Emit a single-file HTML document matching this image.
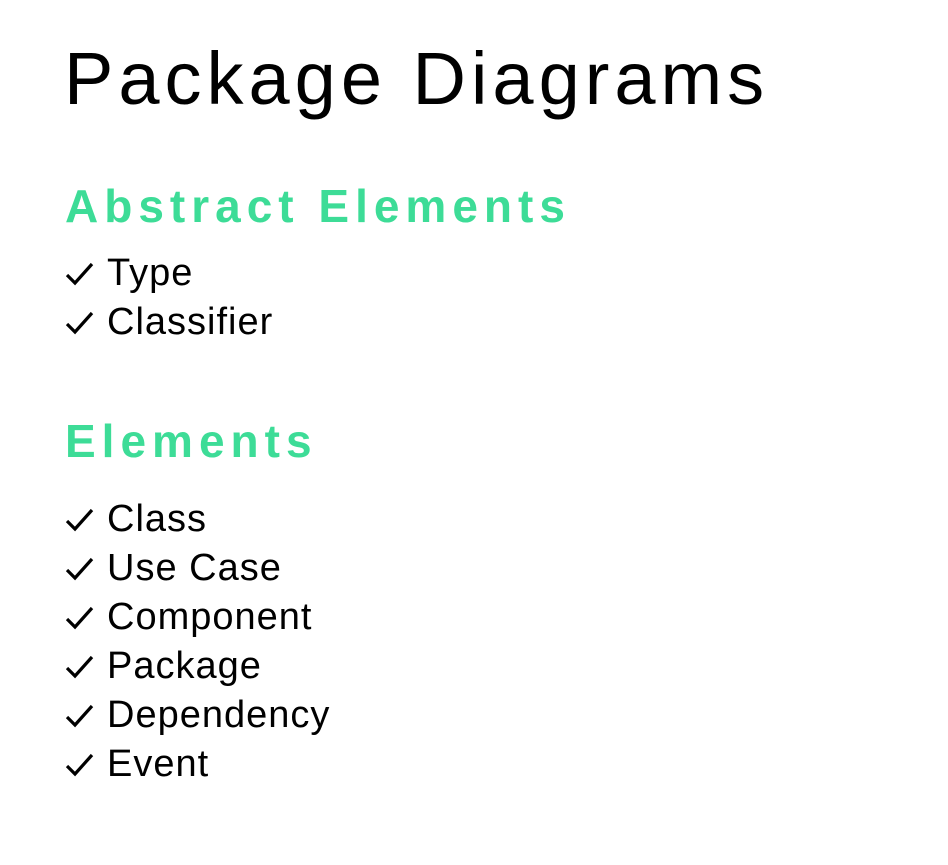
<!DOCTYPE html>
<html><head><style>
body{margin:0;width:948px;height:865px;background:#fff;position:relative;overflow:hidden;font-family:"Liberation Sans",sans-serif;color:#000}
.t{position:absolute;left:64px;top:42px;font-size:74px;line-height:74px;letter-spacing:5px;white-space:nowrap}
.h{position:absolute;left:65px;font-size:46px;line-height:46px;font-weight:bold;color:#3ddc97;letter-spacing:6px;white-space:nowrap}
.l{position:absolute;left:65px;font-size:38px;line-height:49px;letter-spacing:1px;white-space:nowrap}
.l div{position:relative;padding-left:42px}
.l svg{position:absolute;left:1px;top:13px}
</style></head><body>
<div class="t">Package Diagrams</div>
<div class="h" style="top:183px">Abstract Elements</div>
<div class="l" style="top:249px">
<div><svg width="28" height="24" viewBox="0 0 28 24"><path d="M1 13 L9 21 L26 2" fill="none" stroke="#000" stroke-width="3.2"/></svg>Type</div>
<div><svg width="28" height="24" viewBox="0 0 28 24"><path d="M1 13 L9 21 L26 2" fill="none" stroke="#000" stroke-width="3.2"/></svg>Classifier</div></div>
<div class="h" style="top:418px">Elements</div>
<div class="l" style="top:495px">
<div><svg width="28" height="24" viewBox="0 0 28 24"><path d="M1 13 L9 21 L26 2" fill="none" stroke="#000" stroke-width="3.2"/></svg>Class</div>
<div><svg width="28" height="24" viewBox="0 0 28 24"><path d="M1 13 L9 21 L26 2" fill="none" stroke="#000" stroke-width="3.2"/></svg>Use Case</div>
<div><svg width="28" height="24" viewBox="0 0 28 24"><path d="M1 13 L9 21 L26 2" fill="none" stroke="#000" stroke-width="3.2"/></svg>Component</div>
<div><svg width="28" height="24" viewBox="0 0 28 24"><path d="M1 13 L9 21 L26 2" fill="none" stroke="#000" stroke-width="3.2"/></svg>Package</div>
<div><svg width="28" height="24" viewBox="0 0 28 24"><path d="M1 13 L9 21 L26 2" fill="none" stroke="#000" stroke-width="3.2"/></svg>Dependency</div>
<div><svg width="28" height="24" viewBox="0 0 28 24"><path d="M1 13 L9 21 L26 2" fill="none" stroke="#000" stroke-width="3.2"/></svg>Event</div></div>
</body></html>
